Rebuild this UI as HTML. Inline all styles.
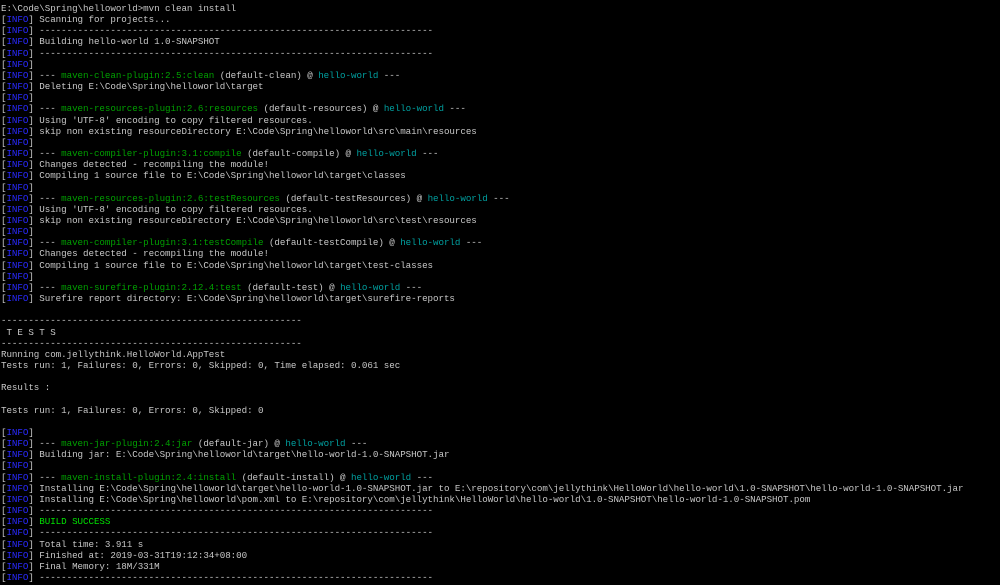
<!DOCTYPE html>
<html><head><meta charset="utf-8"><style>
html,body{margin:0;padding:0;background:#000;width:1000px;height:585px;overflow:hidden}
pre{margin:0;position:absolute;left:1px;top:3px;font-family:"Liberation Mono",monospace;font-size:9.2px;letter-spacing:-0.045px;line-height:11.15px;color:#c8c8c8;white-space:pre}
b{font-weight:normal;color:#2a2aff}
g{color:#00a000}
c{color:#00a0a0}
s{text-decoration:none;color:#00e000}
</style></head><body><pre>E:\Code\Spring\helloworld&gt;mvn clean install
[<b>INFO</b>] Scanning for projects...
[<b>INFO</b>] ------------------------------------------------------------------------
[<b>INFO</b>] Building hello-world 1.0-SNAPSHOT
[<b>INFO</b>] ------------------------------------------------------------------------
[<b>INFO</b>]
[<b>INFO</b>] --- <g>maven-clean-plugin:2.5:clean</g> (default-clean) @ <c>hello-world</c> ---
[<b>INFO</b>] Deleting E:\Code\Spring\helloworld\target
[<b>INFO</b>]
[<b>INFO</b>] --- <g>maven-resources-plugin:2.6:resources</g> (default-resources) @ <c>hello-world</c> ---
[<b>INFO</b>] Using 'UTF-8' encoding to copy filtered resources.
[<b>INFO</b>] skip non existing resourceDirectory E:\Code\Spring\helloworld\src\main\resources
[<b>INFO</b>]
[<b>INFO</b>] --- <g>maven-compiler-plugin:3.1:compile</g> (default-compile) @ <c>hello-world</c> ---
[<b>INFO</b>] Changes detected - recompiling the module!
[<b>INFO</b>] Compiling 1 source file to E:\Code\Spring\helloworld\target\classes
[<b>INFO</b>]
[<b>INFO</b>] --- <g>maven-resources-plugin:2.6:testResources</g> (default-testResources) @ <c>hello-world</c> ---
[<b>INFO</b>] Using 'UTF-8' encoding to copy filtered resources.
[<b>INFO</b>] skip non existing resourceDirectory E:\Code\Spring\helloworld\src\test\resources
[<b>INFO</b>]
[<b>INFO</b>] --- <g>maven-compiler-plugin:3.1:testCompile</g> (default-testCompile) @ <c>hello-world</c> ---
[<b>INFO</b>] Changes detected - recompiling the module!
[<b>INFO</b>] Compiling 1 source file to E:\Code\Spring\helloworld\target\test-classes
[<b>INFO</b>]
[<b>INFO</b>] --- <g>maven-surefire-plugin:2.12.4:test</g> (default-test) @ <c>hello-world</c> ---
[<b>INFO</b>] Surefire report directory: E:\Code\Spring\helloworld\target\surefire-reports

-------------------------------------------------------
 T E S T S
-------------------------------------------------------
Running com.jellythink.HelloWorld.AppTest
Tests run: 1, Failures: 0, Errors: 0, Skipped: 0, Time elapsed: 0.061 sec

Results :

Tests run: 1, Failures: 0, Errors: 0, Skipped: 0

[<b>INFO</b>]
[<b>INFO</b>] --- <g>maven-jar-plugin:2.4:jar</g> (default-jar) @ <c>hello-world</c> ---
[<b>INFO</b>] Building jar: E:\Code\Spring\helloworld\target\hello-world-1.0-SNAPSHOT.jar
[<b>INFO</b>]
[<b>INFO</b>] --- <g>maven-install-plugin:2.4:install</g> (default-install) @ <c>hello-world</c> ---
[<b>INFO</b>] Installing E:\Code\Spring\helloworld\target\hello-world-1.0-SNAPSHOT.jar to E:\repository\com\jellythink\HelloWorld\hello-world\1.0-SNAPSHOT\hello-world-1.0-SNAPSHOT.jar
[<b>INFO</b>] Installing E:\Code\Spring\helloworld\pom.xml to E:\repository\com\jellythink\HelloWorld\hello-world\1.0-SNAPSHOT\hello-world-1.0-SNAPSHOT.pom
[<b>INFO</b>] ------------------------------------------------------------------------
[<b>INFO</b>] <s>BUILD SUCCESS</s>
[<b>INFO</b>] ------------------------------------------------------------------------
[<b>INFO</b>] Total time: 3.911 s
[<b>INFO</b>] Finished at: 2019-03-31T19:12:34+08:00
[<b>INFO</b>] Final Memory: 18M/331M
[<b>INFO</b>] ------------------------------------------------------------------------
</pre></body></html>
